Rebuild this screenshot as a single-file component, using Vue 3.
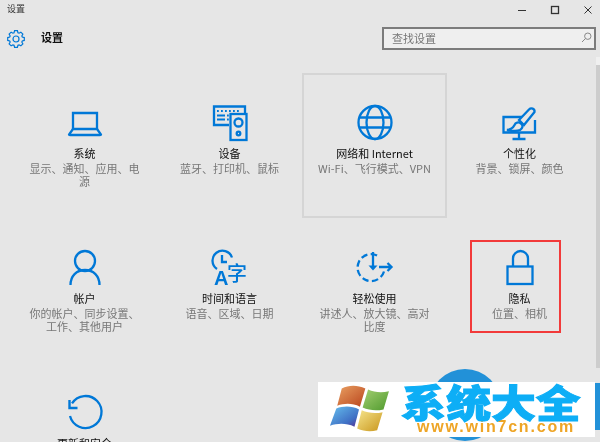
<script setup>
const items = [
  { icon: 'system', title: '系统', desc: '显示、通知、应用、电源' },
  { icon: 'devices', title: '设备', desc: '蓝牙、打印机、鼠标' },
  { icon: 'network', title: '网络和 Internet', desc: 'Wi-Fi、飞行模式、VPN', selected: true },
  { icon: 'personal', title: '个性化', desc: '背景、锁屏、颜色' },
  { icon: 'account', title: '帐户', desc: '你的帐户、同步设置、工作、其他用户' },
  { icon: 'time', title: '时间和语言', desc: '语音、区域、日期' },
  { icon: 'ease', title: '轻松使用', desc: '讲述人、放大镜、高对比度' },
  { icon: 'privacy', title: '隐私', desc: '位置、相机', marked: true },
  { icon: 'update', title: '更新和安全', desc: '' }
]

// outline of the 8 tooth gear in the header
function gearPath() {
  const pts = []
  for (let i = 0; i < 8; i++) {
    const a = (i * Math.PI) / 4
    for (const [r, d] of [[6.6, -0.3], [8.4, -0.17], [8.4, 0.17], [6.6, 0.3]]) {
      pts.push((9 + r * Math.sin(a + d)).toFixed(2) + ' ' + (9 - r * Math.cos(a + d)).toFixed(2))
    }
  }
  return 'M' + pts.join('L') + 'Z'
}
const gear = gearPath()
</script>

<template>
  <div class="window">
    <div class="titlebar">
      <span class="app-name">设置</span>
      <div class="controls">
        <svg width="74" height="14" viewBox="0 0 74 14" fill="none" stroke="#333" stroke-width="1">
          <path d="M0 5.5H8" />
          <rect x="33.5" y="1.5" width="7" height="7" stroke-width="1.3" />
          <path d="M66.5 1.5l7 7M73.5 1.5l-7 7" />
        </svg>
      </div>
    </div>

    <header class="header">
      <svg class="gear" width="18" height="18" viewBox="0 0 18 18" fill="none" stroke="#0078d7" stroke-width="1.2">
        <path :d="gear" />
        <circle cx="9" cy="9" r="3" />
      </svg>
      <h1>设置</h1>
      <div class="search">
        <span>查找设置</span>
        <svg width="11" height="11" viewBox="0 0 11 11" fill="none" stroke="#888" stroke-width="1">
          <circle cx="6.8" cy="4.2" r="3.2" />
          <path d="M4.5 6.5L1 10" />
        </svg>
      </div>
    </header>

    <main class="grid">
      <div v-for="item in items" :key="item.icon" class="cell" :class="{ selected: item.selected }">
        <svg class="icon" width="36" height="36" viewBox="0 0 36 36" fill="none" stroke="#0078d7" stroke-width="2.3">
          <template v-if="item.icon === 'system'">
            <path d="M6 25V8h24v17" />
            <path d="M6 24L2 29.5q0 .5 1 .5h30q1 0 1-.5L30 24z" />
          </template>
          <template v-else-if="item.icon === 'devices'">
            <path d="M17 20H2V1.5h31V8" />
            <rect x="18.5" y="9" width="16" height="26" />
            <circle cx="26.5" cy="17.5" r="4" />
            <circle cx="26.5" cy="28.5" r="1.8" />
            <path d="M5 6h1.8M9 6h1.8M13 6h1.8M17 6h1.8M21 6h1.8M25 6h1.8M5 10.5h8M5 14.5h8M15 10.5h1.8M15 14.5h1.8" stroke-width="2" />
          </template>
          <template v-else-if="item.icon === 'network'">
            <circle cx="18" cy="17.5" r="16.5" />
            <ellipse cx="18" cy="17.5" rx="8.500" ry="16.500" />
            <path d="M3 12.500h30M3 22.500h30" />
          </template>
          <template v-else-if="item.icon === 'personal'">
            <path d="M21 12H1.500v15.500H33V15" />
            <path d="M17 27v6.500M10.500 34h13" />
            <path d="M17 15L27 4.500c2-2 6-1 5.500 2.500L22 20z" fill="#e6e6e6" />
            <path d="M5 25c4-.5 6-2 7.500-5 1-2.500 4-3.500 6.500-1.500s1.500 5-1 6.500c-3 1.500-8 1-13 0z" fill="#e6e6e6" />
          </template>
          <template v-else-if="item.icon === 'account'">
            <circle cx="18" cy="11" r="10" />
            <path d="M3.500 35c0-9 6-15 14.500-15s14.500 6 14.500 15" />
          </template>
          <template v-else-if="item.icon === 'time'">
            <path d="M5 19A10 10 0 1 1 20 7.500" />
            <path d="M10 5v7h5" />
            <text x="2" y="35" class="glyph-a">A</text>
            <text x="15" y="31" class="glyph-zi">字</text>
          </template>
          <template v-else-if="item.icon === 'ease'">
            <path d="M27 21.500A13.500 13.500 0 1 1 21 6" stroke-dasharray="6.500 3.300" />
            <path d="M16 2v16" />
            <path d="M11.500 15.500L16 20.500l4.500-5z" fill="#0078d7" stroke="none" />
            <path d="M22 17h12.500M30.500 13l4 4-4 4" />
          </template>
          <template v-else-if="item.icon === 'privacy'">
            <rect x="5.500" y="16.500" width="25" height="17.500" />
            <path d="M11 17V8.500a7.500 7.500 0 0 1 15 0V17" />
          </template>
          <template v-else>
            <path d="M5 8.400A16 16 0 1 1 3 21" />
            <path d="M2.500 5v8h8" stroke-width="2.400" />
          </template>
        </svg>
        <div class="title">{{ item.title }}</div>
        <div v-if="item.desc" class="desc">{{ item.desc }}</div>
        <div v-if="item.marked" class="mark"></div>
      </div>
    </main>

    <div class="scrollbar"><span class="arrow"></span></div>

    <div class="badge-circle"></div>
    <div class="badge-edge"></div>
    <div class="watermark">
      <svg class="logo" width="62" height="49" viewBox="0 0 68 54">
        <defs>
          <linearGradient id="wr" x1="0" y1="0" x2="1" y2="1">
            <stop offset="0" stop-color="#e9a062" />
            <stop offset="1" stop-color="#b9441c" />
          </linearGradient>
          <linearGradient id="wg" x1="0" y1="0" x2="1" y2="1">
            <stop offset="0" stop-color="#a4cf72" />
            <stop offset="1" stop-color="#4f9a2d" />
          </linearGradient>
          <linearGradient id="wb" x1="0" y1="0" x2="1" y2="1">
            <stop offset="0" stop-color="#66c0ee" />
            <stop offset="0.7" stop-color="#3f6fc4" />
            <stop offset="1" stop-color="#5a2e90" />
          </linearGradient>
          <linearGradient id="wy" x1="0" y1="0" x2="1" y2="1">
            <stop offset="0" stop-color="#f6e58c" />
            <stop offset="1" stop-color="#c9961c" />
          </linearGradient>
        </defs>
        <path d="M15 5c8-4 17-4 26 0l-6 20c-8-4-17-4-25-1z" fill="url(#wr)" />
        <path d="M44 6c7 3 14 4 23 2l-6 20c-8 2-16 1-23-2z" fill="url(#wg)" />
        <path d="M9 27c8-3 17-3 25 1l-5 19c-9-4-18-4-27-1z" fill="url(#wb)" />
        <path d="M37 29c7 3 15 4 23 2l-6 20c-8 2-15 1-22-2z" fill="url(#wy)" />
      </svg>
      <div class="brand">
        <div class="brand-name">系统大全</div>
        <div class="brand-url">www.win7cn.com</div>
      </div>
    </div>
  </div>
</template>

<style>
html,
body {
  margin: 0;
  overflow: hidden;
}
</style>

<style scoped>
.window {
  position: relative;
  width: 600px;
  height: 442px;
  overflow: hidden;
  background: #e6e6e6;
  font-family: "Noto Sans CJK SC", "Liberation Sans", sans-serif;
  font-size: 11px;
  color: #222;
  filter: blur(0.3px);
}

.titlebar {
  display: flex;
  justify-content: space-between;
  height: 19px;
  padding: 4px 8px 0 7px;
  box-sizing: border-box;
}

.app-name {
  font-size: 9px;
  line-height: 10px;
  color: #333;
}

.controls {
  height: 14px;
}

.controls svg {
  display: block;
  margin-top: 1px;
}

.header {
  display: flex;
  align-items: center;
  height: 23px;
  padding: 8px 4px 23px 7px;
}

.gear {
  flex: none;
  margin-top: 1px;
}

.header h1 {
  flex: 1;
  margin: 0 0 3px 16px;
  font-size: 11px;
  font-weight: 700;
  color: #111;
}

.search {
  display: flex;
  align-items: center;
  justify-content: space-between;
  box-sizing: border-box;
  width: 214px;
  height: 23px;
  padding: 0 2px 2px 8px;
  border: 2px solid #7c7c7c;
  background: #efefef;
  color: #777;
}

.grid {
  display: grid;
  grid-template-columns: repeat(4, 145px);
  grid-auto-rows: 145px;
  padding-left: 12px;
}

.cell {
  position: relative;
  display: flex;
  flex-direction: column;
  align-items: center;
  box-sizing: border-box;
  padding: 32px 12px 0;
  text-align: center;
  line-height: 13.5px;
}

.cell.selected {
  padding: 30px 10px 0;
  border: 2px solid #d5d5d5;
}

.icon {
  display: block;
  flex: none;
  overflow: visible;
}

.title {
  margin-top: 6px;
  white-space: nowrap;
  color: #111;
}

.desc {
  width: 118px;
  margin-top: 1px;
  color: #777;
}

.glyph-a {
  fill: #0078d7;
  stroke: none;
  font-family: "Liberation Sans", sans-serif;
  font-size: 20px;
  font-weight: 700;
}

.glyph-zi {
  fill: #0078d7;
  stroke: none;
  font-family: "Noto Sans CJK SC", sans-serif;
  font-size: 20px;
  font-weight: 500;
}

.mark {
  position: absolute;
  left: 23px;
  top: 22px;
  box-sizing: border-box;
  width: 91px;
  height: 93px;
  border: 2px solid #f23a3a;
}

.scrollbar {
  position: absolute;
  right: 0;
  top: 57px;
  width: 4px;
  height: 311px;
  background: #cdcdcd;
}

.arrow {
  position: absolute;
  left: 0;
  top: 0;
  width: 4px;
  height: 8px;
  background: #f0f0f0;
}

.badge-circle {
  position: absolute;
  left: 429px;
  top: 369px;
  width: 72px;
  height: 72px;
  border-radius: 50%;
  background: #2291d8;
}

.badge-edge {
  position: absolute;
  right: 0;
  top: 383px;
  width: 5px;
  height: 47px;
  background: #2291d8;
}

.watermark {
  position: absolute;
  left: 318px;
  top: 382px;
  display: flex;
  box-sizing: border-box;
  width: 277px;
  height: 55px;
  padding-left: 10px;
  background: #fff;
}

.logo {
  flex: none;
  margin-top: 2px;
}

.brand {
  display: flex;
  flex-direction: column;
  align-items: center;
  width: 190px;
  margin-left: 6px;
}

.brand-name {
  height: 38px;
  font-size: 38px;
  line-height: 38px;
  font-weight: 900;
  color: #0daef6;
  white-space: nowrap;
  transform: scaleX(1.18);
  -webkit-text-stroke: 1px #0daef6;
}

.brand-url {
  margin-left: 10px;
  font-family: "Liberation Sans", sans-serif;
  font-size: 16px;
  line-height: 14px;
  font-weight: 700;
  letter-spacing: 1.8px;
  color: #eea526;
}
</style>
